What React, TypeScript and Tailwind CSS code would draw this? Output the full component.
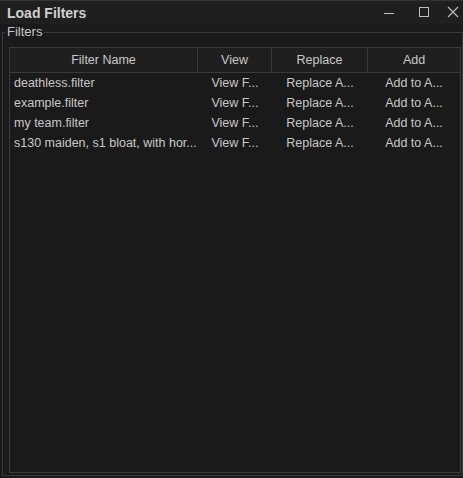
import React from "react";

const rows = [
  "deathless.filter",
  "example.filter",
  "my team.filter",
  "s130 maiden, s1 bloat, with hor...",
];

export default function App() {
  return (
    <div
      className="w-[463px] h-[478px] bg-[#1a1a1a] text-[#c8c8c8] overflow-hidden flex flex-col"
      style={{ fontFamily: '"Liberation Sans", Arial, sans-serif' }}
    >
      {/* title bar */}
      <div className="h-[24px] shrink-0 bg-[#1f1f1f] border-t border-[#343434] flex items-center">
        <div className="pl-[7px] font-bold text-[14px] leading-none text-[#d0d0d0] flex-1">Load Filters</div>
        <div className="flex items-center h-full">
          <svg width="12" height="12" viewBox="0 0 12 12" className="mr-[23px]">
            <line x1="1" y1="6.5" x2="11" y2="6.5" stroke="#c0c0c0" strokeWidth="1" />
          </svg>
          <svg width="12" height="12" viewBox="0 0 12 12" className="mr-[17px] -mt-[1px]">
            <rect x="1.5" y="1.5" width="9" height="9" fill="none" stroke="#c0c0c0" strokeWidth="1" />
          </svg>
          <svg width="12" height="12" viewBox="0 0 12 12" className="mr-[4px] -mt-[1px]">
            <path d="M1 1 L11 11 M11 1 L1 11" stroke="#c0c0c0" strokeWidth="1.1" />
          </svg>
        </div>
      </div>
      {/* group box */}
      <div className="relative flex-1 flex flex-col pt-[8px] pl-[2px] pr-0 pb-[2px]">
        <div className="absolute left-[5px] top-[1px] px-[2px] bg-[#1a1a1a] text-[13px] leading-[14px] text-[#c8c8c8]">
          Filters
        </div>
        <div className="flex-1 border border-[#3a3a3a] pt-[14px] pl-[6px] pr-[1px] pb-[2px] flex flex-col">
          <div className="flex-1 border border-[#3a3a3a] bg-[#1a1a1a] flex flex-col text-[12.5px]">
            <div className="flex h-[25px] border-b border-[#3a3a3a] bg-[#1f1f1f]">
              <div className="w-[188px] flex items-center justify-center border-r border-[#3a3a3a]">Filter Name</div>
              <div className="w-[74px] flex items-center justify-center border-r border-[#3a3a3a]">View</div>
              <div className="w-[96px] flex items-center justify-center border-r border-[#3a3a3a]">Replace</div>
              <div className="flex-1 flex items-center justify-center">Add</div>
            </div>
            {rows.map((r) => (
              <div key={r} className="flex h-[20px] items-center">
                <div className="w-[188px] pl-[4px] whitespace-nowrap">{r}</div>
                <div className="w-[74px] text-center whitespace-nowrap">View F...</div>
                <div className="w-[96px] text-center whitespace-nowrap">Replace A...</div>
                <div className="flex-1 text-center whitespace-nowrap">Add to A...</div>
              </div>
            ))}
          </div>
        </div>
      </div>
    </div>
  );
}
